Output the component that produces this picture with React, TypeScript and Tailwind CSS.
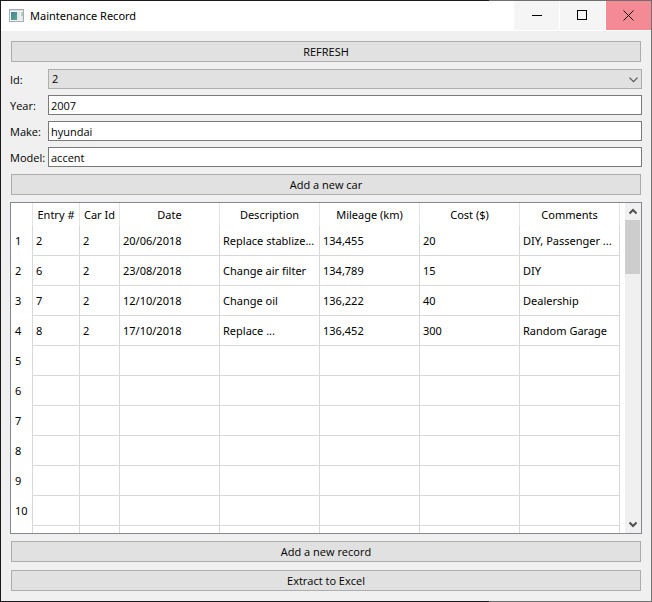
import { useState } from "react";

const columns = [
  { label: "Entry #", width: "w-[47px]" },
  { label: "Car Id", width: "w-[40px]" },
  { label: "Date", width: "w-[100px]" },
  { label: "Description", width: "w-[100px]" },
  { label: "Mileage (km)", width: "w-[100px]" },
  { label: "Cost ($)", width: "w-[100px]" },
  { label: "Comments", width: "w-[100px]" },
];

const records = [
  ["2", "2", "20/06/2018", "Replace stablize...", "134,455", "20", "DIY, Passenger ..."],
  ["6", "2", "23/08/2018", "Change air filter", "134,789", "15", "DIY"],
  ["7", "2", "12/10/2018", "Change oil", "136,222", "40", "Dealership"],
  ["8", "2", "17/10/2018", "Replace ...", "136,452", "300", "Random Garage"],
];

const rowNumbers = ["1", "2", "3", "4", "5", "6", "7", "8", "9", "10", ""];

function AppIcon() {
  return (
    <svg width="15" height="13" viewBox="0 0 15 13" aria-hidden="true">
      <defs>
        <linearGradient id="pane" x1="0" y1="0" x2="1" y2="1">
          <stop offset="0" stopColor="#4682a0" />
          <stop offset="1" stopColor="#5aa884" />
        </linearGradient>
      </defs>
      <rect x="0.5" y="0.5" width="14" height="12" fill="#f4f6f8" stroke="#a6abb0" />
      <rect x="1" y="1" width="13" height="1" fill="#d5dade" />
      <rect x="2" y="3" width="6" height="8" fill="url(#pane)" />
      <rect x="8" y="3" width="3" height="8" fill="#e3e8ee" />
      <rect x="12" y="3" width="2" height="4" fill="#a9d3b4" />
      <rect x="12" y="7" width="2" height="4" fill="#dfe6ee" />
    </svg>
  );
}

function TitleBar() {
  return (
    <header className="flex h-[30px] shrink-0 items-start bg-white">
      <div className="flex h-[29px] flex-1 items-center gap-[6px] pl-2">
        <AppIcon />
        <h1 className="font-['Noto_Sans',sans-serif] text-[11px] leading-4">Maintenance Record</h1>
      </div>
      <div className="flex gap-px">
        <button aria-label="Minimize" className="flex h-[29px] w-[45px] items-center justify-center bg-[#f5f5f5]">
          <svg width="11" height="11" viewBox="0 0 11 11" shapeRendering="crispEdges">
            <path d="M1 5.5H11" stroke="#000" />
          </svg>
        </button>
        <button aria-label="Maximize" className="flex h-[29px] w-[45px] items-center justify-center bg-[#f5f5f5]">
          <svg width="11" height="11" viewBox="0 0 11 11">
            <rect x="0.5" y="0.5" width="9" height="9" fill="none" stroke="#000" shapeRendering="crispEdges" />
          </svg>
        </button>
        <button aria-label="Close" className="flex h-[29px] w-[45px] items-center justify-center bg-[#f48b94]">
          <svg width="11" height="11" viewBox="0 0 11 11">
            <path d="M0.5 0.5L10.5 10.5M10.5 0.5L0.5 10.5" stroke="#1a0f10" />
          </svg>
        </button>
      </div>
    </header>
  );
}

function PushButton({ children }: { children: string }) {
  return (
    <button className="mx-px block h-[21px] shrink-0 border border-[#adadad] bg-[#e1e1e1] text-center text-[11px] leading-4">
      {children}
    </button>
  );
}

function TextField({ id, label, initial }: { id: string; label: string; initial: string }) {
  const [value, setValue] = useState(initial);
  return (
    <>
      <label htmlFor={id} className="pt-px">
        {label}
      </label>
      <input
        id={id}
        value={value}
        onChange={(e) => setValue(e.target.value)}
        className="h-5 w-full min-w-0 border border-[#7a7a7a] bg-white px-[2px] outline-none"
      />
    </>
  );
}

function CarForm() {
  return (
    <div className="grid shrink-0 grid-cols-[38px_1fr] items-center gap-y-[6px] text-[11px] leading-4">
      <label htmlFor="car-id" className="pt-px">
        Id:
      </label>
      <div className="relative">
        <select
          id="car-id"
          defaultValue="2"
          className="block h-5 w-full appearance-none border border-[#adadad] bg-[#e1e1e1] px-[3px] outline-none"
        >
          <option>1</option>
          <option>2</option>
        </select>
        <svg
          className="pointer-events-none absolute top-2 right-1"
          width="9"
          height="6"
          viewBox="0 0 9 6"
        >
          <path d="M0.5 0.7L4.5 4.7L8.5 0.7" fill="none" stroke="#555" strokeWidth="1.2" />
        </svg>
      </div>
      <TextField id="year" label="Year:" initial="2007" />
      <TextField id="make" label="Make:" initial="hyundai" />
      <TextField id="model" label="Model:" initial="accent" />
    </div>
  );
}

function ScrollBar() {
  return (
    <div className="flex w-4 shrink-0 flex-col bg-[#f0f0f0] pr-px">
      <button aria-label="Scroll up" className="flex h-[17px] items-center justify-center">
        <svg width="8" height="7" viewBox="0 0 8 7">
          <path d="M0.5 5.5L4 2L7.5 5.5" fill="none" stroke="#505050" strokeWidth="2" />
        </svg>
      </button>
      <div className="h-[54px] bg-[#cdcdcd]" />
      <button aria-label="Scroll down" className="mt-auto flex h-[17px] items-center justify-center">
        <svg width="8" height="7" viewBox="0 0 8 7">
          <path d="M0.5 1.5L4 5L7.5 1.5" fill="none" stroke="#505050" strokeWidth="2" />
        </svg>
      </button>
    </div>
  );
}

function RecordTable() {
  return (
    <div className="flex min-h-0 flex-1 border border-[#828790] bg-white">
      <div className="min-w-0 flex-1 overflow-hidden">
        <table className="w-[609px] table-fixed border-separate border-spacing-0 font-['Noto_Sans',sans-serif] text-[11px] leading-4">
          <thead>
            <tr className="h-[23px]">
              <th aria-label="Row" className="w-[22px] border-r border-[#e5e5e5] p-0" />
              {columns.map((c) => (
                <th
                  key={c.label}
                  className={`${c.width} border-r border-[#e5e5e5] p-0 text-center font-normal whitespace-nowrap`}
                >
                  {c.label}
                </th>
              ))}
            </tr>
          </thead>
          <tbody>
            {rowNumbers.map((n, row) => (
              <tr key={row} className="h-[30px]">
                <th scope="row" className="border-r border-[#d8d8d8] p-0 pl-1 text-left font-normal">
                  {n}
                </th>
                {columns.map((c, i) => (
                  <td
                    key={c.label}
                    className="overflow-hidden border-r border-b border-[#d8d8d8] p-0 pl-[3px] whitespace-nowrap"
                  >
                    {records[row]?.[i]}
                  </td>
                ))}
              </tr>
            ))}
          </tbody>
        </table>
      </div>
      <ScrollBar />
    </div>
  );
}

export default function App() {
  return (
    <div className="h-screen bg-linear-to-r from-[#1c191d] from-75% to-[#707070] to-75% p-px font-['Open_Sans','Noto_Sans',sans-serif] text-black">
      <div className="flex h-full flex-col bg-[#f0f0f0]">
        <TitleBar />
        <main className="flex min-h-0 flex-1 flex-col gap-[7px] px-[9px] py-[10px]">
          <PushButton>REFRESH</PushButton>
          <CarForm />
          <PushButton>Add a new car</PushButton>
          <RecordTable />
          <div className="flex shrink-0 flex-col gap-2">
            <PushButton>Add a new record</PushButton>
            <PushButton>Extract to Excel</PushButton>
          </div>
        </main>
      </div>
    </div>
  );
}
